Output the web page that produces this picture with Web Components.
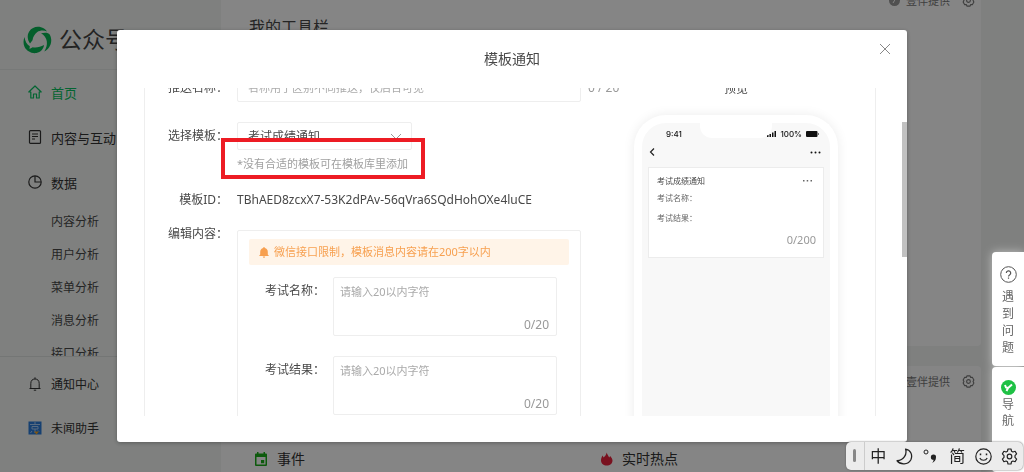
<!DOCTYPE html>
<html lang="zh-CN">
<head>
<meta charset="utf-8">
<title>公众号</title>
<style>
  html, body { margin: 0; height: 100%; overflow: hidden; }
  body { font-family: "Noto Sans", "Noto Sans CJK SC", sans-serif; font-size: 12px; color: #484848; background: #f3f6f4; }
</style>
</head>
<body>
<app-shell>
  <side-nav slot="nav"></side-nav>
  <dash-card class="tools" heading="我的工具栏"></dash-card>
  <dash-card class="feeds">
    <topic-link icon="event">事件</topic-link>
    <topic-link icon="hot">实时热点</topic-link>
  </dash-card>
</app-shell>
<modal-dialog heading="模板通知">
  <template-form></template-form>
  <phone-preview></phone-preview>
</modal-dialog>
<help-dock></help-dock>
<ime-bar></ime-bar>

<script>
const define = (name, html, setup) => customElements.define(name, class extends HTMLElement {
  connectedCallback() {
    if (this.shadowRoot) return;
    const root = this.attachShadow({ mode: 'open' });
    root.innerHTML = '<style>*{box-sizing:border-box}button,input,textarea,select{font:inherit;color:inherit;margin:0;padding:0;border:0;background:none}a{color:inherit;text-decoration:none}svg{display:block;flex:none}</style>' + html;
    if (setup) setup(this, root);
  }
});

const GEAR = s => `<svg width="${s}" height="${s}" viewBox="0 0 14 14" fill="none" stroke="currentColor" stroke-width="1.200"><path d="M5.300 1h3.400l.7 1.600 1.700-.1 1.700 2.900L11.900 7l.9 1.600-1.700 2.900-1.700-.1L8.700 13H5.300l-.7-1.600-1.700.1L1.200 8.600 2.100 7l-.9-1.600 1.700-2.900 1.700.1z" stroke-linejoin="round"/><circle cx="7" cy="7" r="2"/></svg>`;

define('app-shell', `
<style>
  :host { display: grid; grid-template-columns: 221px minmax(0, 1fr); height: 100vh; }
  main { overflow: hidden; padding-right: 43px; }
  .page { display: flex; flex-direction: column; gap: 20px; margin-top: -12px; }
</style>
<slot name="nav"></slot>
<main><div class="page"><slot></slot></div></main>`);

define('side-nav', `
<style>
  :host { display: flex; flex-direction: column; height: 100vh; min-height: 0; color: #333; }
  header { display: flex; align-items: center; gap: 7px; height: 70px; padding: 10px 0 0 23px; border-bottom: 1px solid #e4e8e6; font-size: 23px; line-height: 32px; white-space: nowrap; color: #444; }
  header span { padding-bottom: 2px; }
  nav { flex: 1; min-height: 0; overflow: hidden; }
  footer { height: 116px; border-top: 1px solid #dfe3e1; padding-top: 5px; }
  a { display: flex; align-items: center; height: 45px; padding-left: 28px; gap: 9px; font-size: 13px; }
  nav a { padding-bottom: 1px; }
  a.on { color: #07c160; }
  nav a.sub { height: 33px; padding-left: 51px; font-size: 12px; color: #484848; }
  footer a { height: 44px; font-size: 12px; }
</style>
<header>
  <svg width="29" height="28" viewBox="0 0 29 28" fill="#07b454"><path d="M7 17.500C4.500 14 3.800 9 6.200 5.500 9 1 14 0 18 1.200c3 .8 5 2.300 6 4.300-3-1.500-7-1.300-9.700.5-2.800 2-4.300 5-4.800 8.200z"/><path d="M18 7.200c4-1 7.500-.7 8.700 1.300 2.300 4 2 9-.4 12.500-1.300 2-3.300 4-5 4.500 2-3 3-6.500 2.500-10.200-.4-3.300-2.600-6.300-5.800-8.100z"/><path d="M1.500 11C2 15.500 4 18.500 6.800 20.200L6.500 23l3.200-1.800c3.800.6 7.800-.2 11.300-2.200-.3 4-3.500 7.300-7.500 8-5 .8-10-1.800-12-6.200-1.300-3-1.300-6.700 0-9.800z"/></svg>
  <span>公众号</span>
</header>
<nav>
  <a class="on" href="#home"><svg width="14" height="14" viewBox="0 0 14 14" fill="none" stroke="currentColor" stroke-width="1.200" stroke-linejoin="round"><path d="M7 1 .8 7h2v6h2.700V9h3v4h2.700V7h2z"/></svg>首页</a>
  <a href="#content"><svg width="14" height="14" viewBox="0 0 14 14" fill="none" stroke="currentColor" stroke-width="1.200"><rect x="1.500" y=".6" width="11" height="12.800" rx="1"/><path d="M4 4h6M4 6.500h6M4 9h3"/></svg>内容与互动</a>
  <a href="#data"><svg width="14" height="14" viewBox="0 0 14 14" fill="none" stroke="currentColor" stroke-width="1.200"><circle cx="7" cy="7" r="6.200"/><path d="M7 1v6h6"/></svg>数据</a>
  <a class="sub" href="#c1">内容分析</a>
  <a class="sub" href="#c2">用户分析</a>
  <a class="sub" href="#c3">菜单分析</a>
  <a class="sub" href="#c4">消息分析</a>
  <a class="sub" href="#c5">接口分析</a>
</nav>
<footer>
  <a href="#notice"><svg width="14" height="14" viewBox="0 0 14 14" fill="none" stroke="currentColor"><path d="M1.500 11.500h11M2.800 11.500V6.500C2.800 3.500 4.500 2 7 2s4.200 1.500 4.200 4.500v5M7 .3V2M5.800 13.200h2.400"/></svg>通知中心</a>
  <a href="#helper"><svg width="14" height="14" viewBox="0 0 14 14"><rect x=".5" y=".5" width="13" height="13" fill="#2b7bd8"/><path d="M2 3.500h10M7 1v2.500M4 5.500h6v2.500H4zM7 8v4M4 10l-1.500 2M10 9.500l1 1" stroke="#a9cdf5" fill="none"/><path d="M6 10.500h5L8.500 13.500z" fill="#f5a623"/></svg>未闻助手</a>
</footer>`);

define('dash-card', `
<style>
  :host { display: flex; flex-direction: column; background: #fff; border-radius: 4px; }
  :host(.tools) { height: 358px; }
  :host(.feeds) { height: 140px; }
  .by { display: flex; align-items: center; justify-content: flex-end; gap: 6px; height: 24px; padding-right: 6px; font-size: 11px; color: #777; }
  :host(.feeds) .by { margin-top: 3px; }
  .by a { margin-left: 6px; }
  h2 { margin: 3px 0 0 28px; font-size: 16px; font-weight: 400; line-height: 24px; }
  .links { display: grid; grid-template-columns: 346px 1fr; padding: 54px 0 0 33px; }
</style>
<div class="by"><svg width="11" height="11" viewBox="0 0 11 11"><circle cx="5.500" cy="5.500" r="5.500" fill="#999"/><path d="M3 3l2.500 2.500L8 3M5.500 5.500 4 8" stroke="#fff" fill="none"/></svg><span>壹伴提供</span><a href="#set" aria-label="设置">${GEAR(13)}</a></div>
<h2></h2>
<div class="links"><slot></slot></div>`, (el, root) => {
  const h = root.querySelector('h2');
  if (el.hasAttribute('heading')) { h.textContent = el.getAttribute('heading'); root.querySelector('.links').remove(); } else h.remove();
});

define('topic-link', `
<style>
  :host { display: block; color: #333; }
  a { display: flex; align-items: center; gap: 9px; font-size: 14px; line-height: 24px; }
</style>
<a href="#topic"><slot></slot></a>`, (el, root) => {
  const art = {
    event: '<svg width="14" height="14" viewBox="0 0 14 14"><path d="M2 1.500h10a1 1 0 0 1 1 1V13a1 1 0 0 1-1 1H2a1 1 0 0 1-1-1V2.500a1 1 0 0 1 1-1zM2.500 5v7.500h9V5z" fill="#1aad19" fill-rule="evenodd"/><path d="M3 0h1.500v2H3zM9.500 0H11v2H9.500zM7 8h3.200v3.200H7z" fill="#1aad19"/></svg>',
    hot: '<svg width="13" height="14" viewBox="0 0 13 14"><path d="M6.800.5C7.200 2.500 8.300 3.800 9.200 5.500L10.200 4C11.500 5.500 12.500 7 12.500 8.500 12.500 11.500 10 13.500 6.800 13.500S1 11.500 1 8.500C1 6.800 1.800 5 2.600 3.600L3.600 5.400C5 4.500 6.200 2.800 6.800.5z" fill="#e8213c"/></svg>'
  };
  root.querySelector('a').insertAdjacentHTML('afterbegin', art[el.getAttribute('icon')]);
});

define('modal-dialog', `
<style>
  :host { position: fixed; inset: 0; display: grid; justify-items: center; align-items: stretch; padding: 30px 16px; background: rgba(0,0,0,.48); }
  section { position: relative; display: flex; flex-direction: column; width: 100%; max-width: 790px; min-height: 0; background: #fff; border-radius: 3px; box-shadow: 0 1px 4px rgba(0,0,0,.3); }
  header { height: 58px; text-align: center; }
  h1 { margin: 0; font-size: 14px; font-weight: 400; line-height: 58px; }
  button { position: absolute; top: 13px; right: 16px; color: #888; }
  .body { flex: 1; min-height: 0; margin-bottom: 26px; overflow: auto; scrollbar-width: none; padding: 0 31px 0 27px; }
  .panel { display: flex; justify-content: space-between; padding: 24px 37px 24px 23px; border: 1px solid #eee; }
  .thumb { position: absolute; right: 0; top: 92px; width: 5px; height: 135px; background: #c1c1c1; }
</style>
<section role="dialog" aria-labelledby="t">
  <header><h1 id="t"></h1><button aria-label="关闭"><svg width="12" height="12" viewBox="0 0 12 12" stroke="currentColor"><path d="M1 1l10 10M11 1 1 11"/></svg></button></header>
  <div class="body"><div class="panel"><slot></slot></div></div>
  <div class="thumb"></div>
</section>`, (el, root) => {
  root.querySelector('h1').textContent = el.getAttribute('heading');
  requestAnimationFrame(() => { root.querySelector('.body').scrollTop = 39; });
});

define('template-form', `
<style>
  :host { display: block; }
  .row { display: grid; grid-template-columns: 60px 344px auto; column-gap: 9px; align-items: start; line-height: 28px; }
  .row > label, .row > .label { text-align: right; }
  .row + .row { margin-top: 20px; }
  .row.id { margin-top: 8px; }
  .row.edit { margin-top: 6px; }
  .title { width: 100%; height: 28px; border: 1px solid #eee; border-radius: 2px; padding: 0 10px; font-size: 11px; }
  ::placeholder { color: #aaa; opacity: 1; }
  .count { color: #999; margin-left: -2px; white-space: nowrap; }
  .select { position: relative; width: 175px; }
  select { display: block; appearance: none; width: 100%; height: 28px; border: 1px solid #eee; border-radius: 2px; padding: 0 10px; }
  .select svg { position: absolute; right: 10px; top: 11px; color: #999; pointer-events: none; }
  .hint { position: relative; height: 28px; line-height: 28px; font-size: 11px; color: #a0a0a0; white-space: nowrap; }
  .mark { position: absolute; left: -16px; top: -12px; width: 204px; height: 41px; border: 4px solid #ed1c24; }
  .box { margin-top: 10px; border: 1px solid #eee; border-radius: 2px; padding: 8px 11px 40px; display: grid; row-gap: 20px; }
  .alert { display: flex; align-items: center; gap: 5px; height: 26px; margin-bottom: -8px; padding-left: 10px; border-radius: 2px; background: #fff4e8; color: #f7a050; font-size: 11px; }
</style>
<div class="row"><label for="n">推送名称：</label><input class="title" id="n" placeholder="名称用于区别不同推送，仅后台可见"><span class="count">0 / 20</span></div>
<div class="row"><label for="s">选择模板：</label><div>
  <div class="select"><select id="s"><option>考试成绩通知</option></select><svg width="12" height="7" viewBox="0 0 12 7" fill="none" stroke="currentColor"><path d="M1 1l5 5 5-5"/></svg></div>
  <div class="hint">*没有合适的模板可在模板库里添加<span class="mark"></span></div></div></div>
<div class="row id"><span class="label">模板ID：</span><span>TBhAED8zcxX7-53K2dPAv-56qVra6SQdHohOXe4luCE</span></div>
<div class="row edit"><span class="label">编辑内容：</span>
  <div class="box">
    <div class="alert"><svg width="10" height="11" viewBox="0 0 10 11" fill="currentColor"><path d="M5 0a1 1 0 0 1 .8 1C7.800 1.400 8.800 3 8.800 5v2.500L10 9H0l1.200-1.500V5c0-2 1-3.600 3-4A1 1 0 0 1 5 0zM3.800 9.600h2.400a1.200 1.200 0 0 1-2.400 0z"/></svg>微信接口限制，模板消息内容请在200字以内</div>
    <limited-field label="考试名称："></limited-field>
    <limited-field label="考试结果："></limited-field>
  </div></div>`);

define('limited-field', `
<style>
  :host { display: grid; grid-template-columns: 60px 224px; column-gap: 8px; padding-left: 16px; line-height: 28px; }
  .field { position: relative; height: 59px; }
  textarea { display: block; width: 100%; height: 100%; resize: none; border: 1px solid #eee; border-radius: 2px; padding: 6px; font-size: 11px; line-height: 16px; }
  ::placeholder { color: #aaa; opacity: 1; }
  .count { position: absolute; right: 8px; bottom: 2px; line-height: 18px; font-size: 12px; color: #999; }
</style>
<label for="f"></label><div class="field"><textarea id="f" placeholder="请输入20以内字符"></textarea><span class="count">0/20</span></div>`,
(el, root) => { root.querySelector('label').textContent = el.getAttribute('label'); });

define('phone-preview', `
<style>
  :host { display: flex; flex-direction: column; width: 204px; }
  .cap { text-align: center; line-height: 30px; margin-bottom: 11px; }
  .phone { height: 360px; border: solid #fff; border-width: 8px 8px 0; border-radius: 32px 32px 0 0; background: #f8f8f8; box-shadow: 0 0 12px rgba(0,0,0,.08); padding: 0 6px; }
  .bar { position: relative; display: flex; justify-content: space-between; align-items: center; height: 22px; padding: 0 5px 0 18px; font: 500 8px/12px Inter, sans-serif; color: #111; }
  .time { font-weight: 500; }
  .notch { position: absolute; left: 52px; top: 0; width: 72px; height: 15px; background: #fff; border-radius: 0 0 12px 12px; }
  .sig { display: flex; align-items: center; gap: 4px; }
  .nav { display: flex; justify-content: space-between; align-items: center; height: 14px; padding: 0 3px 0 1px; }
  .card { margin-top: 8px; height: 91px; border: 1px solid #ececec; background: #fff; padding: 4px 7px 0 8px; font-size: 8px; line-height: 16px; }
  .head { display: flex; justify-content: space-between; align-items: center; padding-right: 4px; line-height: 18px; }
  p { margin: 0 0 4px; color: #666; }
  .n { text-align: right; font-size: 11px; color: #999; margin-top: 6px; }
</style>
<div class="cap">预览</div>
<div class="phone">
  <div class="bar"><span class="notch"></span><b class="time">9:41</b><span class="sig"><svg width="9" height="6" viewBox="0 0 9 6" fill="#111"><path d="M0 4h1.500v2H0zM2.500 3H4v3H2.500zM5 1.500h1.500V6H5zM7.500 0H9v6H7.500z"/></svg>100%<svg width="13" height="6" viewBox="0 0 13 6"><rect width="11.500" height="6" rx="1" fill="#111"/><path d="M12.500 2v2" stroke="#777"/></svg></span></div>
  <div class="nav"><svg width="6" height="8" viewBox="0 0 6 8" fill="none" stroke="#222" stroke-width="1.200"><path d="M5 .5 1.500 4 5 7.500"/></svg><svg width="11" height="3" viewBox="0 0 11 3" fill="#111"><circle cx="1.500" cy="1.500" r="1"/><circle cx="5.500" cy="1.500" r="1"/><circle cx="9.500" cy="1.500" r="1"/></svg></div>
  <div class="card"><div class="head"><span>考试成绩通知</span><svg width="9" height="2" viewBox="0 0 9 2" fill="#666"><path d="M0 0h1.500v1.500H0zM3.700 0h1.500v1.500H3.700zM7.500 0H9v1.500H7.500z"/></svg></div>
    <p>考试名称：</p><p>考试结果：</p><div class="n">0/200</div></div>
</div>`);

define('help-dock', `
<style>
  :host { position: fixed; right: 0; bottom: 0; display: flex; flex-direction: column; gap: 1px; width: 32px; filter: drop-shadow(0 0 5px rgba(255,255,255,.5)); }
  button { display: flex; flex-direction: column; align-items: center; background: #fff; border-radius: 4px 0 0 4px; color: #666; font-size: 12px; line-height: 16px; }
  .q { height: 114px; padding-top: 14px; gap: 5px; }
  .g { height: 105px; padding-top: 13px; gap: 2px; }
  span { width: 12px; word-break: break-all; }
  .q span { line-height: 17px; }
</style>
<button class="q"><svg width="17" height="17" viewBox="0 0 17 17" fill="none" stroke="#555"><circle cx="8.500" cy="8.500" r="7.800"/><path d="M6.300 7a2.200 2.200 0 1 1 3.300 1.900c-.8.5-1.100.8-1.100 1.600M8.500 11.500v1.200" stroke-width="1.200"/></svg><span>遇到问题</span></button>
<button class="g"><svg width="15" height="15" viewBox="0 0 15 15"><circle cx="7.500" cy="7.500" r="7.500" fill="#1fc145"/><path d="M4 5l1 2.500 2 .5M11 4.500 7 8l-1.500 3" stroke="#fff" stroke-width="2" fill="none"/></svg><span>导航</span></button>`);

define('ime-bar', `
<style>
  :host { position: fixed; right: 1px; bottom: 2px; display: grid; grid-template-columns: 19px repeat(6, 1fr); width: 177px; height: 28px; background: #ececec; border-radius: 5px; box-shadow: 0 0 2px #555; color: #222; }
  i { display: block; width: 3px; height: 13px; margin: 7px 0 0 7px; border-radius: 2px; background: #888; }
  .grip { border-right: 1px solid #ccc; }
  button { display: flex; align-items: center; justify-content: center; font-size: 16px; line-height: 24px; white-space: nowrap; }
</style>
<div class="grip"><i></i></div>
<button>中</button>
<button aria-label="半角"><svg width="17" height="17" viewBox="0 0 16 16" fill="none" stroke="currentColor" stroke-width="1.200"><path d="M9 1C13.500 1.500 16 6.500 14 11 11.500 16 4 16 1 12 7.500 11.500 10.500 6 9 1z" stroke-linejoin="round"/></svg></button>
<button aria-label="标点"><svg width="15" height="16" viewBox="0 0 15 16"><circle cx="3" cy="4" r="2" fill="none" stroke="currentColor"/><path d="M10.500 6.500a2.500 2.500 0 0 1 2.500 2.700c0 2.800-1.500 4.800-4 5.800 1-1 1.600-2 1.500-3.200a2.600 2.600 0 0 1 0-5.300z" fill="currentColor"/></svg></button>
<button>简</button>
<button aria-label="表情"><svg width="17" height="17" viewBox="0 0 17 17" fill="none" stroke="currentColor" stroke-width="1.200"><circle cx="8.500" cy="8.500" r="7.700"/><path d="M4.800 10c1.500 3 6 3 7.400 0"/><path d="M5.500 5.500v1.800M11.500 5.500v1.800" stroke-width="1.500"/></svg></button>
<button aria-label="设置"><svg width="17" height="17" viewBox="0 0 17 17" fill="none" stroke="currentColor" stroke-width="1.200" stroke-linejoin="round"><path d="M7 1h3l.5 2.200 1.400.8 2.200-.7 1.500 2.600L14 7.600v1.800l1.600 1.700-1.500 2.600-2.200-.7-1.400.8L10 16H7l-.5-2.200-1.400-.8-2.200.7-1.500-2.600L3 9.400V7.600L1.400 5.900l1.500-2.600 2.200.7 1.400-.8z"/><circle cx="8.500" cy="8.500" r="2.300"/></svg></button>`);
</script>
</body>
</html>
